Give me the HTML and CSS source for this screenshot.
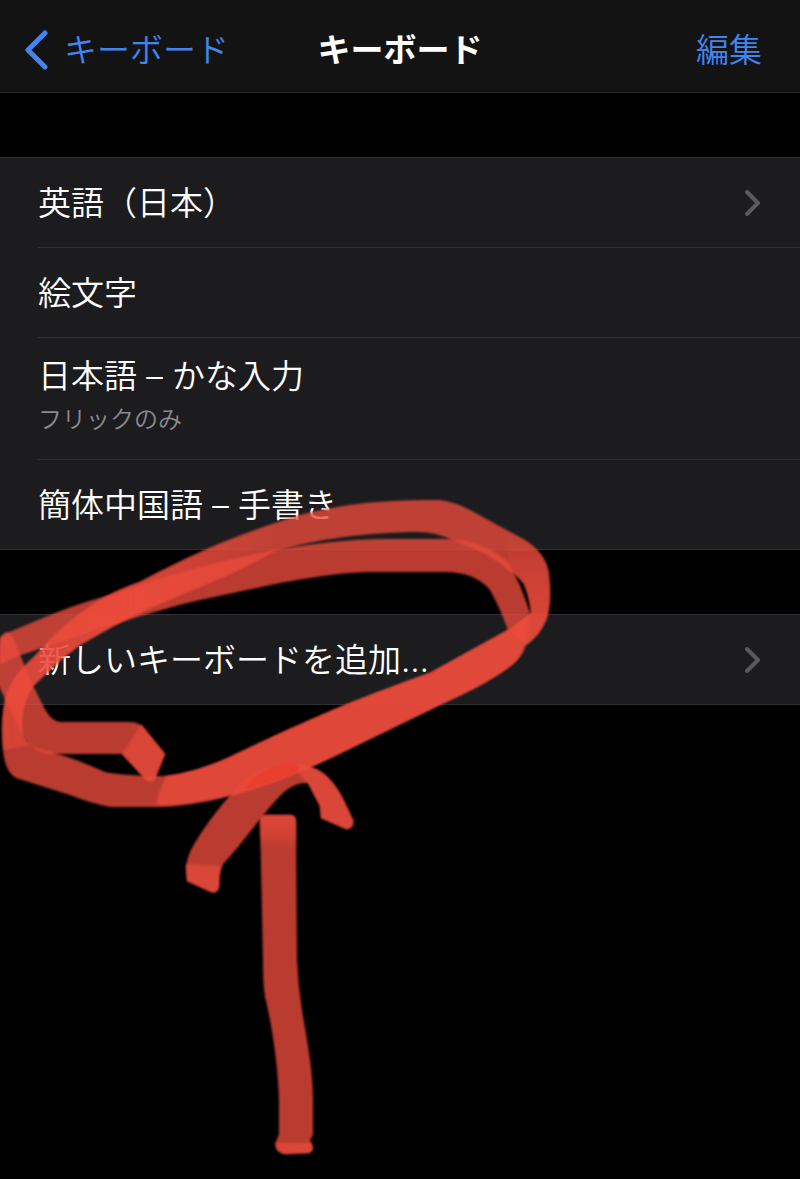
FILE: index.html
```html
<!DOCTYPE html>
<html lang="ja">
<head>
    <meta charset="UTF-8">
    <meta name="viewport" content="width=device-width, initial-scale=1.0">
    <title>キーボード</title>
    <link rel="stylesheet" href="styles.css">
</head>
<body>

<header class="navbar">
    <a class="back" href="#">
        <svg class="back-icon" viewBox="0 0 24 40" aria-hidden="true">
            <path d="M21 3 L4 20 L21 37"/>
        </svg>
        キーボード
    </a>
    <h1>キーボード</h1>
    <button type="button" class="edit">編集</button>
</header>

<main>
    <ul class="list">
        <li>
            <a class="row" href="#">
                <span>英語（日本）</span>
                <svg class="chevron" viewBox="0 0 16 26" aria-hidden="true"><path d="M2 2 L13 13 L2 24"/></svg>
            </a>
        </li>
        <li><div class="row">絵文字</div></li>
        <li>
            <div class="row row-tall">
                <span>日本語 – かな入力</span>
                <small>フリックのみ</small>
            </div>
        </li>
        <li><div class="row">簡体中国語 – 手書き</div></li>
    </ul>

    <ul class="list">
        <li>
            <a class="row" href="#">
                <span>新しいキーボードを追加…</span>
                <svg class="chevron" viewBox="0 0 16 26" aria-hidden="true"><path d="M2 2 L13 13 L2 24"/></svg>
            </a>
        </li>
    </ul>
</main>

<!-- red marker: circle round "add new keyboard" and an arrow -->
<svg class="marker" width="800" height="1179" viewBox="0 0 800 1179" aria-hidden="true">
    <!-- tail -->
    <path d="M165 754 L143 727 Q138 722 130 722 H60 Q52 721 46 711 L33 686 L14 640 Q8 626 0 638 L-4 680 L20 730 Q30 752 50 754 H122 L146 780 Q151 783 155 779 Z"/>
    <path class="soft" d="M165 754 L141 724 L122 754 L146 780 Q151 783 155 779 Z"/>
    <!-- first sweep, over the top and down to the right -->
    <path d="M0 640 Q3 634 12 631 L55 613 Q85 601 115 594 C200 563 300 539 390 539 H450 Q485 542 508 562 Q520 582 530 613 L508 630 Q500 608 490 590 Q475 572 445 572 H370 Q340 572 280 583 L200 600 C140 614 60 642 18 656 L0 664 Z"/>
    <path d="M530 613 Q528 650 513 664 Q490 682 450 700 L345 751 Q240 803 160 805 Q155 803 158 796 L166 776 Q195 773 230 757 C300 724 340 705 430 673 L508 630 Z"/>
    <!-- second sweep, all the way round -->
    <path d="M513 664 Q490 682 450 700 L345 751 Q240 804 160 807 H110 Q90 803 70 795 L16 778 Q5 772 3 750 C1 725 2 700 12 682 Q20 669 34 657 Q62 624 92 605 Q115 590 140 582 C200 550 250 530 300 515 C350 502 390 500 440 500 Q455 502 470 510 L525 540 Q547 554 549 575 Q552 605 546 620 Q540 635 526 645 Q522 657 513 664 Z M508 630 Q522 617 531 613 Q530 598 524 584 Q517 575 508 570 Q490 553 452 540 Q435 532 420 532 C360 532 300 542 270 554 C220 583 160 600 110 628 L80 645 L63 658 L33 686 Q22 702 22 725 Q22 742 40 749 Q70 756 105 772 Q125 776 166 776 Q195 773 230 757 C300 724 340 705 430 673 Z"/>
    <path class="fade-side" d="M3 750 C1 725 2 700 12 682 Q20 669 34 657 Q62 624 92 605 Q115 590 140 582 C200 550 240 533 280 521 V549 C220 583 160 600 110 628 L80 645 L63 658 L33 686 Q22 702 22 725 Q22 740 30 745 Z"/>
    <path class="fade-up" d="M508 550 L508 530 L525 540 Q547 554 549 575 Q552 605 546 620 Q540 635 526 645 L508 630 L531 613 Q530 598 524 584 Q517 575 508 570 Z"/>
    <!-- arrow head -->
    <path d="M186 868 Q187 857 193 846 Q208 820 232 793 Q256 764 294 764 C330 765 340 792 353 820 Q354 829 346 829 L321 818 L320 806 L308 783 Q296 782 284 792 C265 810 243 843 224 863 Q219 869 219 886 Q218 894 211 892 L187 881 Z"/>
    <path class="soft" d="M186 864 L222 866 Q219 869 219 886 Q218 894 211 892 L187 881 Z"/>
    <path class="soft" d="M294 764 C330 765 340 792 353 820 Q354 829 346 829 L321 818 L320 806 L308 783 Q300 778 294 764 Z"/>
    <path class="hot" d="M244 789 Q262 764 293 764 Q300 765 300 769 Q280 782 244 789 Z"/>
    <!-- arrow shaft -->
    <path d="M260 820 Q260 815 266 815 H290 Q296 815 296 822 L297 960 Q298 985 302 1010 C307 1040 313 1070 313 1100 V1135 L310 1140 Q316 1150 309 1153 L285 1154 Q275 1152 275 1144 L279 1134 V1100 C278 1065 272 1025 265 997 Q263 985 263 960 Z"/>
    <path class="fade" d="M260 820 Q260 815 266 815 H290 Q296 815 296 822 V850 H261 Z"/>
    <path class="soft" d="M277 1143 H311 Q315 1150 309 1153 L285 1154 Q275 1152 277 1143 Z"/>
    <defs>
        <linearGradient id="fade" x1="0" y1="0" x2="0" y2="1">
            <stop offset="0" stop-color="#f04c3c" stop-opacity="0.8"/>
            <stop offset="0.5" stop-color="#f04c3c" stop-opacity="0.6"/>
            <stop offset="1" stop-color="#f04c3c" stop-opacity="0"/>
        </linearGradient>
        <linearGradient id="fade-side" x1="0" y1="0" x2="1" y2="0">
            <stop offset="0" stop-color="#f04c3c" stop-opacity="0.6"/>
            <stop offset="0.5" stop-color="#f04c3c" stop-opacity="0.7"/>
            <stop offset="1" stop-color="#f04c3c" stop-opacity="0"/>
        </linearGradient>
        <linearGradient id="fade-up" x1="0" y1="1" x2="0" y2="0">
            <stop offset="0" stop-color="#f04c3c" stop-opacity="0.8"/>
            <stop offset="0.4" stop-color="#f04c3c" stop-opacity="0.6"/>
            <stop offset="1" stop-color="#f04c3c" stop-opacity="0"/>
        </linearGradient>
    </defs>
</svg>

</body>
</html>
```
FILE: styles.css
```css
* {
    box-sizing: border-box;
}
body {
    position: relative;
    margin: 0;
    min-height: 100vh;
    background-color: black;
    color: white;
    font-family: Inter, "Noto Sans CJK JP", sans-serif;
    font-size: 33px;
    font-weight: 350;
    line-height: 40px;
    overflow-x: hidden;
}
.navbar {
    display: grid;
    grid-template-columns: 1fr auto 1fr;
    align-items: center;
    height: 93px;
    padding: 8px 38px 0 24px;
    background-color: #131313;
    border-bottom: 1px solid #262627;
}
.navbar h1 {
    margin: 0;
    padding-left: 14px;
    font-size: 33px;
    font-weight: 700;
}
.back {
    display: flex;
    align-items: center;
    gap: 16px;
    color: #4285ee;
    text-decoration: none;
}
.back-icon {
    width: 24px;
    height: 40px;
    fill: none;
    stroke: #4285ee;
    stroke-width: 5;
    stroke-linecap: round;
    stroke-linejoin: round;
}
.edit {
    justify-self: end;
    padding: 0;
    border: none;
    background: none;
    color: #4285ee;
    font: inherit;
    cursor: pointer;
}
.list {
    list-style: none;
    margin: 64px 0 0;
    padding: 0 0 0 38px;
    background-color: #1c1c1e;
    border-top: 1px solid #303032;
    border-bottom: 1px solid #303032;
}
.list li + li {
    border-top: 1px solid #303032;
}
.row {
    display: flex;
    align-items: center;
    justify-content: space-between;
    min-height: 89px;
    padding: 1px 39px 0 0;
    color: white;
    text-decoration: none;
}
.row-tall {
    flex-direction: column;
    align-items: flex-start;
    justify-content: center;
    gap: 8px;
    min-height: 121px;
    padding-bottom: 6px;
}
.row small {
    color: #8a8a8f;
    font-size: 24px;
    line-height: 32px;
}
.chevron {
    width: 16px;
    height: 26px;
    fill: none;
    stroke: #5a5a5e;
    stroke-width: 4;
    stroke-linecap: round;
    stroke-linejoin: round;
}
.marker {
    position: absolute;
    top: 0;
    left: 0;
    pointer-events: none;
}
.marker path {
    fill: #e84b3c;
    fill-opacity: 0.8;
    filter: blur(1px);
}
.marker .soft {
    fill: #f04c3c;
    fill-opacity: 0.6;
}
.marker .hot {
    fill: #ea3a2a;
}
.marker .fade {
    fill: url(#fade);
}
.marker .fade-side {
    fill: url(#fade-side);
}
.marker .fade-up {
    fill: url(#fade-up);
}
```
